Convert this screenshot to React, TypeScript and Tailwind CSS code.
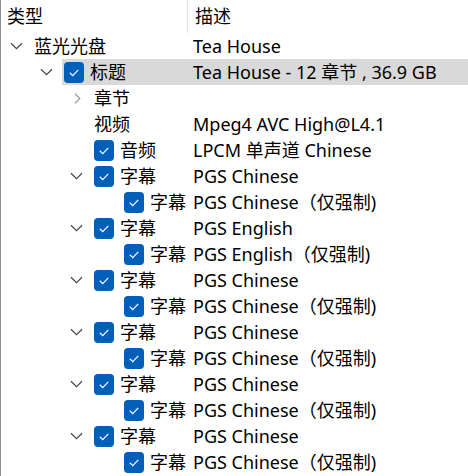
import React from "react";

type Row = {
  level: 0 | 1 | 2 | 3;
  chevron?: "down" | "right";
  check?: boolean;
  label: string;
  desc: string;
  selected?: boolean;
};

const rows: Row[] = [
  { level: 0, chevron: "down", label: "蓝光光盘", desc: "Tea House" },
  { level: 1, chevron: "down", check: true, label: "标题", desc: "Tea House - 12 章节 , 36.9 GB", selected: true },
  { level: 2, chevron: "right", label: "章节", desc: "" },
  { level: 2, label: "视频", desc: "Mpeg4 AVC High@L4.1" },
  { level: 2, check: true, label: "音频", desc: "LPCM 单声道 Chinese" },
  { level: 2, chevron: "down", check: true, label: "字幕", desc: "PGS Chinese" },
  { level: 3, check: true, label: "字幕", desc: "PGS Chinese（仅强制)" },
  { level: 2, chevron: "down", check: true, label: "字幕", desc: "PGS English" },
  { level: 3, check: true, label: "字幕", desc: "PGS English（仅强制)" },
  { level: 2, chevron: "down", check: true, label: "字幕", desc: "PGS Chinese" },
  { level: 3, check: true, label: "字幕", desc: "PGS Chinese（仅强制)" },
  { level: 2, chevron: "down", check: true, label: "字幕", desc: "PGS Chinese" },
  { level: 3, check: true, label: "字幕", desc: "PGS Chinese（仅强制)" },
  { level: 2, chevron: "down", check: true, label: "字幕", desc: "PGS Chinese" },
  { level: 3, check: true, label: "字幕", desc: "PGS Chinese（仅强制)" },
  { level: 2, chevron: "down", check: true, label: "字幕", desc: "PGS Chinese" },
  { level: 3, check: true, label: "字幕", desc: "PGS Chinese（仅强制)" },
];

const indentClass = ["w-0", "w-[30px]", "w-[60px]", "w-[90px]"];
const firstColClass = ["w-[157px]", "w-[127px]", "w-[97px]", "w-[67px]"];

function ChevronDown() {
  return (
    <svg width="13" height="8" viewBox="0 0 13 8" fill="none">
      <path d="M1 1.2 L6.5 6.6 L12 1.2" stroke="#4a4a4a" strokeWidth="1.3" />
    </svg>
  );
}

function ChevronRight() {
  return (
    <svg width="7" height="11" viewBox="0 0 7 11" fill="none" className="ml-[2px]">
      <path d="M1 0.8 L5.8 5.5 L1 10.2" stroke="#9a9a9a" strokeWidth="1.2" />
    </svg>
  );
}

function Check() {
  return (
    <div className="w-[20px] h-[21px] rounded-[4px] bg-[#005fb8] flex items-center justify-center shrink-0">
      <svg width="20" height="21" viewBox="0 0 20 21" fill="none">
        <path d="M5.8 10.8 L8.7 13.6 L14.3 7.8" stroke="#ffffff" strokeWidth="1.2" />
      </svg>
    </div>
  );
}

export default function App() {
  return (
    <div
      className="w-[468px] h-[476px] bg-white border-l border-[#8a9097] overflow-hidden text-[18px] text-black"
      style={{ fontFamily: '"Noto Sans", "Noto Sans CJK SC", sans-serif' }}
    >
      <div className="flex h-[33px] items-center">
        <div className="w-[187px] h-full flex items-center pl-[6px] border-r border-[#e3e3e3]">类型</div>
        <div className="pl-[7px]">描述</div>
      </div>
      {rows.map((r, i) => (
        <div key={i} className="flex h-[26px] items-center">
          <div className={`${indentClass[r.level]} shrink-0`} />
          <div className="w-[31px] h-full shrink-0 flex items-center justify-center">
            {r.chevron === "down" && <ChevronDown />}
            {r.chevron === "right" && <ChevronRight />}
          </div>
          <div className={`flex-1 h-full flex items-center ${r.selected ? "bg-[#d9d9d9]" : ""}`}>
            <div className={`${firstColClass[r.level]} shrink-0 h-full flex items-center pl-[2px] gap-[6px] whitespace-nowrap`}>
              {r.check && <Check />}
              <span className="leading-none">{r.label}</span>
            </div>
            <div className="pl-[4px] whitespace-nowrap leading-none">{r.desc}</div>
          </div>
        </div>
      ))}
    </div>
  );
}
